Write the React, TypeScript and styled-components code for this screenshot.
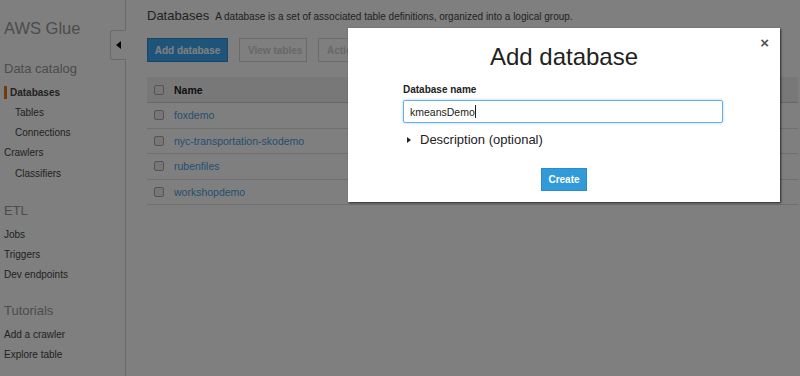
import React from "react";
import styled, { createGlobalStyle } from "styled-components";

const Global = createGlobalStyle`
  html, body { margin: 0; padding: 0; }
  body {
    width: 800px; height: 376px; overflow: hidden; background: #fff;
    font-family: "Liberation Sans", Arial, Helvetica, sans-serif;
  }
`;

const Page = styled.div`
  position: relative;
  display: flex;
  width: 800px;
  height: 376px;
  background: #fff;
  color: #444;
`;

const Sidebar = styled.nav`
  position: relative;
  flex: 0 0 126px;
  border-right: 1px solid #d4d4d4;
  padding: 18px 0 0 4px;
  box-sizing: border-box;
  display: flex;
  flex-direction: column;
`;

const Brand = styled.div`
  font-size: 16.5px;
  line-height: 20px;
  color: #999;
`;

const SectionTitle = styled.div<{ $top: number }>`
  margin-top: ${(p) => p.$top}px;
  margin-bottom: 5px;
  font-size: 13px;
  line-height: 16px;
  color: #999;
`;

const NavItem = styled.div<{ $indent?: boolean; $active?: boolean }>`
  display: flex;
  align-items: center;
  height: 20.25px;
  font-size: 10px;
  color: #444;
  font-weight: ${(p) => (p.$active ? 700 : 400)};
  padding-left: ${(p) => (p.$active ? 0 : p.$indent ? 11 : 0)}px;
  &::before {
    content: "";
    display: ${(p) => (p.$active ? "block" : "none")};
    width: 3px;
    height: 13px;
    margin-right: 3px;
    background: #ec7211;
  }
`;

const CollapseTab = styled.div`
  position: absolute;
  top: 30px;
  right: -1px;
  width: 15px;
  height: 28px;
  border: 1px solid #d4d4d4;
  border-right: none;
  border-radius: 3px 0 0 3px;
  background: #fff;
  display: flex;
  align-items: center;
  justify-content: center;
`;

const Main = styled.main`
  flex: 1;
  padding: 8px 2px 0 21px;
  display: flex;
  flex-direction: column;
`;

const HeadingRow = styled.div`
  display: flex;
  align-items: baseline;
  gap: 6px;
  height: 16px;
`;

const Heading = styled.h1`
  margin: 0;
  font-size: 13px;
  font-weight: 400;
  line-height: 16px;
  color: #444;
`;

const HeadingNote = styled.span`
  font-size: 10px;
  color: #444;
`;

const Toolbar = styled.div`
  display: flex;
  gap: 11px;
  margin-top: 14px;
`;

const Button = styled.button<{ $primary?: boolean; $w: number }>`
  width: ${(p) => p.$w}px;
  height: 24px;
  padding: 0;
  font-family: inherit;
  font-size: 10px;
  font-weight: 700;
  border: 1px solid ${(p) => (p.$primary ? "#2f8fd6" : "#d6d6d6")};
  background: ${(p) => (p.$primary ? "#3fa9f5" : "#fff")};
  color: ${(p) => (p.$primary ? "#fff" : "#cfcfcf")};
  text-align: ${(p) => (p.$primary ? "center" : "left")};
  padding-left: ${(p) => (p.$primary ? 0 : 8)}px;
`;

const Table = styled.div`
  margin-top: 15px;
  display: flex;
  flex-direction: column;
`;

const HeaderRow = styled.div`
  display: flex;
  align-items: center;
  height: 25px;
  background: #f1f1f1;
  border-bottom: 1px solid #cccccc;
  padding-left: 7px;
  gap: 10px;
  font-size: 10.5px;
  font-weight: 700;
  color: #222;
`;

const Row = styled.div`
  display: flex;
  align-items: center;
  height: 25.5px;
  box-sizing: border-box;
  border-bottom: 1px solid #dedede;
  padding-left: 7px;
  gap: 10px;
`;

const Check = styled.span`
  width: 8px;
  height: 8px;
  border: 1px solid #a8a8a8;
  border-radius: 2px;
  background: #eeeeee;
`;

const DbLink = styled.a`
  font-size: 10.5px;
  color: #4a9ede;
  text-decoration: none;
`;

const Overlay = styled.div`
  position: absolute;
  inset: 0;
  background: rgba(0, 0, 0, 0.5);
`;

const Modal = styled.div`
  position: absolute;
  left: 348px;
  top: 28px;
  width: 432px;
  height: 174px;
  box-sizing: border-box;
  background: #fff;
  box-shadow: 1px 1px 2px rgba(0, 0, 0, 0.7);
  padding: 15px 0 0 55px;
  display: flex;
  flex-direction: column;
`;

const ModalTitle = styled.h2`
  margin: 0 0 0 -55px;
  font-size: 24px;
  font-weight: 400;
  line-height: 28px;
  text-align: center;
  color: #222;
`;

const Close = styled.span`
  position: absolute;
  top: 7px;
  right: 11px;
  font-size: 15px;
  font-weight: 700;
  color: #555;
  line-height: 16px;
`;

const Label = styled.div`
  margin-top: 13px;
  font-size: 10px;
  font-weight: 700;
  line-height: 12px;
  color: #222;
`;

const Field = styled.div`
  margin-top: 4px;
  width: 320px;
  height: 23px;
  box-sizing: border-box;
  border: 1px solid #66afe9;
  border-radius: 2px;
  box-shadow: 0 0 3px rgba(102, 175, 233, 0.6);
  padding-left: 6px;
  display: flex;
  align-items: center;
  font-size: 10.5px;
  color: #222;
`;

const Caret = styled.span`
  width: 1px;
  height: 13px;
  background: #222;
`;

const Disclosure = styled.div`
  margin-top: 9px;
  display: flex;
  align-items: center;
  gap: 9px;
  font-size: 13px;
  line-height: 16px;
  color: #222;
  padding-left: 4px;
`;

const Triangle = styled.span`
  width: 0;
  height: 0;
  border-top: 3.5px solid transparent;
  border-bottom: 3.5px solid transparent;
  border-left: 4px solid #222;
`;

const ModalFooter = styled.div`
  margin: 20px 0 0 -55px;
  display: flex;
  justify-content: center;
`;

const CreateButton = styled.button`
  width: 46px;
  height: 23px;
  padding: 0;
  border: 1px solid #2a8ccc;
  background: #319bd9;
  color: #fff;
  font-family: inherit;
  font-size: 10px;
  font-weight: 700;
`;

const databases = ["foxdemo", "nyc-transportation-skodemo", "rubenfiles", "workshopdemo"];

export default function App() {
  return (
    <>
      <Global />
      <Page>
        <Sidebar>
          <Brand>AWS Glue</Brand>
          <SectionTitle $top={23}>Data catalog</SectionTitle>
          <NavItem $active>Databases</NavItem>
          <NavItem $indent>Tables</NavItem>
          <NavItem $indent>Connections</NavItem>
          <NavItem>Crawlers</NavItem>
          <NavItem $indent>Classifiers</NavItem>
          <SectionTitle $top={20}>ETL</SectionTitle>
          <NavItem>Jobs</NavItem>
          <NavItem>Triggers</NavItem>
          <NavItem>Dev endpoints</NavItem>
          <SectionTitle $top={18}>Tutorials</SectionTitle>
          <NavItem>Add a crawler</NavItem>
          <NavItem>Explore table</NavItem>
          <CollapseTab>
            <svg width="5" height="8" viewBox="0 0 5 8">
              <path d="M5 0 L0 4 L5 8 Z" fill="#111" />
            </svg>
          </CollapseTab>
        </Sidebar>
        <Main>
          <HeadingRow>
            <Heading>Databases</Heading>
            <HeadingNote>
              A database is a set of associated table definitions, organized into a logical group.
            </HeadingNote>
          </HeadingRow>
          <Toolbar>
            <Button $primary $w={81}>Add database</Button>
            <Button $w={68}>View tables</Button>
            <Button $w={80}>Action ▾</Button>
          </Toolbar>
          <Table>
            <HeaderRow>
              <Check />
              <span>Name</span>
            </HeaderRow>
            {databases.map((d) => (
              <Row key={d}>
                <Check />
                <DbLink href="#">{d}</DbLink>
              </Row>
            ))}
          </Table>
        </Main>
        <Overlay />
        <Modal>
          <Close>×</Close>
          <ModalTitle>Add database</ModalTitle>
          <Label>Database name</Label>
          <Field>
            kmeansDemo
            <Caret />
          </Field>
          <Disclosure>
            <Triangle />
            Description (optional)
          </Disclosure>
          <ModalFooter>
            <CreateButton>Create</CreateButton>
          </ModalFooter>
        </Modal>
      </Page>
    </>
  );
}
